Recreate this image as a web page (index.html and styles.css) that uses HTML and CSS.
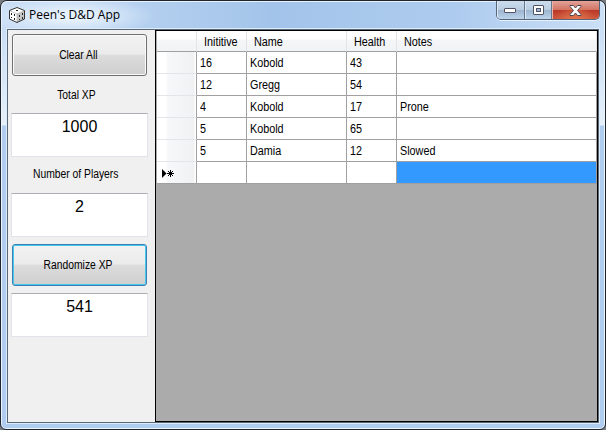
FILE: index.html
```html
<!DOCTYPE html>
<html lang="en">
<head>
<meta charset="utf-8">
<title>Peen's D&amp;D App</title>
<link rel="stylesheet" href="styles.css">
</head>
<body>
<div class="window">
  <header class="titlebar">
    <svg class="icon" width="18" height="18" viewBox="0 0 18 18">
      <path d="M9 1.500 16.500 4.500V13L9 16.500 1.500 13V4.500Z" fill="#fff"/>
      <path d="M9 8 16.500 4.500V13L9 16.500Z" fill="#c4c4c4"/>
      <path d="M1.500 4.500 9 8 16.500 4.500M9 8V16.500" fill="none" stroke="#aaa" stroke-width=".7"/>
      <path d="M9 1.500 16.500 4.500V13L9 16.500 1.500 13V4.500Z" fill="none" stroke="#333"/>
      <path d="M8 4h2v1H8zM3 7h1v2H3zM6 8h1v2H6zM3 11h1v1H3zM6 12h1v2H6zM11 9h1v2h-1zM14 7h1v2h-1zM11 13h1v1h-1zM14 11h1v2h-1z" fill="#222"/>
    </svg>
    <h1 class="title">Peen's D&amp;D App</h1>
    <div class="controls">
      <span class="ctl"><svg width="13" height="7"><rect x=".5" y="1.500" width="11" height="4" rx=".5" fill="#fff" stroke="#505466"/></svg></span>
      <span class="ctl"><svg width="13" height="11"><rect x="1.500" y=".5" width="10" height="9" rx=".5" fill="#fff" stroke="#505466"/><rect x="4.500" y="3.500" width="4" height="3" fill="#9fb7d4" stroke="#505466"/></svg></span>
      <span class="ctl close"><svg width="13" height="11" viewBox="0 0 13 11"><path d="M1 .5h3.500l2 2.500 2-2.500H12v1L8.500 5.500l3.500 4v1H8.500l-2-2.500-2 2.500H1v-1l3.500-4L1 1.500Z" fill="#fff" stroke="#504450"/></svg></span>
    </div>
  </header>
  <main class="client">
    <aside class="side">
      <button class="btn"><span class="t">Clear All</span></button>
      <div class="label"><span class="t">Total XP</span></div>
      <div class="field">1000</div>
      <div class="label second"><span class="t">Number of Players</span></div>
      <div class="field">2</div>
      <button class="btn focus"><span class="t">Randomize XP</span></button>
      <div class="field">541</div>
    </aside>
    <section class="sheet">
      <div class="row head"><i></i><b><span class="t">Inititive</span></b><b><span class="t">Name</span></b><b><span class="t">Health</span></b><b><span class="t">Notes</span></b></div>
      <div class="row"><i></i><b><span class="t">16</span></b><b><span class="t">Kobold</span></b><b><span class="t">43</span></b><b></b></div>
      <div class="row"><i></i><b><span class="t">12</span></b><b><span class="t">Gregg</span></b><b><span class="t">54</span></b><b></b></div>
      <div class="row"><i></i><b><span class="t">4</span></b><b><span class="t">Kobold</span></b><b><span class="t">17</span></b><b><span class="t">Prone</span></b></div>
      <div class="row"><i></i><b><span class="t">5</span></b><b><span class="t">Kobold</span></b><b><span class="t">65</span></b><b></b></div>
      <div class="row"><i></i><b><span class="t">5</span></b><b><span class="t">Damia</span></b><b><span class="t">12</span></b><b><span class="t">Slowed</span></b></div>
      <div class="row"><i><svg class="mark" width="14" height="9"><path d="M0 0 4.500 4.500 0 9Z" fill="#000"/><path d="M8.500 1v7M5 4.500h7M6 2l5 5M11 2 6 7" stroke="#000"/></svg></i><b></b><b></b><b></b><b class="selected"></b></div>
    </section>
  </main>
</div>
</body>
</html>
```
FILE: styles.css
```css
* { box-sizing: border-box; }
body {
  margin: 0;
  width: 606px;
  height: 430px;
  overflow: hidden;
  background: #777b80;
  font: 12px "Liberation Sans", Arial, sans-serif;
  color: #000;
}
.window {
  width: 606px;
  height: 430px;
  padding: 0 6px 5px;
  border: 1px solid #20242c;
  border-radius: 7px 7px 6px 6px;
  background: linear-gradient(#c3d9f3 0, #c9def5 28px, #e6f0fa 124px, #b0ccee 125px, #b0ccee);
  box-shadow: inset 0 0 0 1px #eaf4fe;
}
.titlebar {
  display: flex;
  height: 28px;
  margin: 0 -5px;
  padding-left: 6px;
  border-radius: 6px 6px 0 0;
  background:
    radial-gradient(ellipse 85px 20px at 68px 15px, #e6f1fc 20%, transparent),
    linear-gradient(90deg, #c7dcf5, #a3c4ea 45%, #adcbee 75%, #cbdff6);
  box-shadow: inset 0 1px #e8f3fd;
}
.icon { margin-top: 5px; flex: none; }
.title {
  margin: 5px 0 0 3px;
  font: 12px/17px "Open Sans", sans-serif;
  white-space: nowrap;
}
.controls {
  display: flex;
  width: 104px;
  height: 19px;
  margin: 0 4px 0 auto;
  border: 1px solid #59667a;
  border-top: 0;
  border-radius: 0 0 5px 5px;
  overflow: hidden;
  box-shadow: 0 1px #e5f2ff;
}
.ctl {
  display: flex;
  align-items: center;
  justify-content: center;
  width: 28px;
  border-right: 1px solid #68778e;
  background: linear-gradient(#cbdced, #bacde1 48%, #9db4cf 50%, #bdd4ed);
  box-shadow: inset 1px 0 #dbe8f5;
}
.ctl + .ctl { width: 27px; }
.ctl.close {
  width: 47px;
  border: 0;
  background: radial-gradient(ellipse at 50% 110%, #e37a50, transparent 60%), linear-gradient(#e3a399, #d37565 48%, #b93524 50%, #cf5a40);
  box-shadow: inset 1px 0 #eab4aa;
}
.client {
  display: flex;
  width: 592px;
  height: 394px;
  border: 1px solid #596779;
  box-shadow: 0 0 0 1px #ddecfb;
}
.side { width: 147px; padding: 4px 8px 0 3px; background: #f0f0f0; }
.t { display: inline-block; transform: scaleX(.9); transform-origin: left; white-space: nowrap; }
.btn {
  display: block;
  width: 135px;
  height: 42px;
  margin: 0 1px;
  padding: 0 2px 0 0;
  border: 1px solid #707070;
  border-radius: 3px;
  background: linear-gradient(#f2f2f2, #ebebeb 48%, #dcdcdc 50%, #cfcfcf);
  box-shadow: inset 0 0 0 1px #fafafa;
  font: inherit;
  color: #000;
}
.btn.focus { margin: 7px 1px; border-color: #3c7fb1; box-shadow: inset 0 0 0 1px #43c8f0; }
.btn .t, .label .t { transform: scaleX(.86); transform-origin: center; }
.label { height: 37px; padding: 12px 6px 0 0; line-height: 14px; text-align: center; }
.label.second { height: 36px; padding-top: 10px; }
.field {
  width: 137px;
  height: 44px;
  padding-top: 4px;
  border: 1px solid #e2e3ea;
  border-top-color: #abadb3;
  background: #fff;
  font-size: 16px;
  line-height: 18px;
  text-align: center;
}
.sheet { width: 443px; padding: 0 1px; border: 1px solid #000; background: #ababab; }
.row { display: grid; grid-template-columns: 40px 50px 100px 50px 200px; grid-template-rows: 22px; height: 22px; background: #fff; }
.row i {
  border-right: 1px solid #a0a0a0;
  border-bottom: 1px solid #e3e5e8;
  background: linear-gradient(90deg, #fff 9px, #f7f8fa 10px, #f0f1f3 37px, #fff 38px);
}
.row:last-child i { border-bottom-color: #a0a0a0; }
.row b { padding-left: 3px; border-right: 1px solid #a0a0a0; border-bottom: 1px solid #a0a0a0; font-weight: normal; line-height: 23px; }
.row.head { grid-template-rows: 21px; height: 21px; background: linear-gradient(#fff 8px, #f5f6f7 9px, #f1f2f4); }
.row.head i { background: none; border-right-color: #e3e4e6; border-bottom-color: #a0a0a0; }
.row.head b { padding-left: 7px; border-right-color: #e3e4e6; line-height: 22px; }
.row b.selected { background: #3399ff; }
.mark { display: block; margin: 7px 0 0 5px; }
```
